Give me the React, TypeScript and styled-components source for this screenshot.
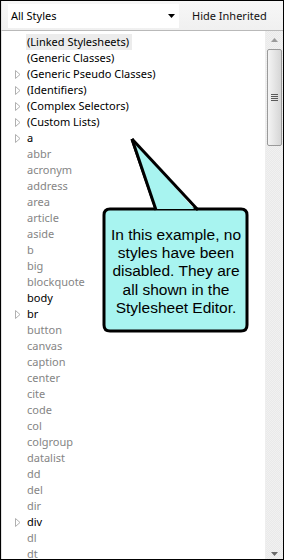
import React from 'react'
import styled, { createGlobalStyle } from 'styled-components'

const GlobalStyle = createGlobalStyle`
  html, body {
    margin: 0;
    padding: 0;
    background: #ffffff;
  }
`

type Item = { name: string; dark?: boolean; expand?: boolean; selected?: boolean }

const items: Item[] = [
  { name: '(Linked Stylesheets)', dark: true, selected: true },
  { name: '(Generic Classes)', dark: true },
  { name: '(Generic Pseudo Classes)', dark: true, expand: true },
  { name: '(Identifiers)', dark: true, expand: true },
  { name: '(Complex Selectors)', dark: true, expand: true },
  { name: '(Custom Lists)', dark: true, expand: true },
  { name: 'a', dark: true, expand: true },
  { name: 'abbr' },
  { name: 'acronym' },
  { name: 'address' },
  { name: 'area' },
  { name: 'article' },
  { name: 'aside' },
  { name: 'b' },
  { name: 'big' },
  { name: 'blockquote' },
  { name: 'body', dark: true },
  { name: 'br', dark: true, expand: true },
  { name: 'button' },
  { name: 'canvas' },
  { name: 'caption' },
  { name: 'center' },
  { name: 'cite' },
  { name: 'code' },
  { name: 'col' },
  { name: 'colgroup' },
  { name: 'datalist' },
  { name: 'dd' },
  { name: 'del' },
  { name: 'dir' },
  { name: 'div', dark: true, expand: true },
  { name: 'dl' },
  { name: 'dt' },
]

function StyleList() {
  return (
    <Frame>
      <GlobalStyle />
      <Toolbar>
        <Combo>
          <span>All Styles</span>
          <svg width="7" height="4" viewBox="0 0 7 4">
            <path d="M0 0 H7 L3.5 4 Z" fill="#000" />
          </svg>
        </Combo>
        <HideButton>Hide Inherited</HideButton>
      </Toolbar>
      <Body>
        <List>
          {items.map((item) => (
            <Row key={item.name}>
              <Expander>
                {item.expand && (
                  <svg width="6" height="9" viewBox="0 0 6 9">
                    <path d="M0.5 0.5 L5 4.5 L0.5 8.5 Z" fill="none" stroke="#b0b0b0" strokeWidth="1" />
                  </svg>
                )}
              </Expander>
              <Label $dark={item.dark} $selected={item.selected}>{item.name}</Label>
            </Row>
          ))}
        </List>
        <Scrollbar>
          <ArrowBtn>
            <svg width="7" height="4" viewBox="0 0 7 4">
              <path d="M0 4 L3.5 0 L7 4 Z" fill="#9a9a9a" />
            </svg>
          </ArrowBtn>
          <Thumb>
            <Grip />
          </Thumb>
          <Track />
          <ArrowBtn>
            <svg width="7" height="4" viewBox="0 0 7 4">
              <path d="M0 0 H7 L3.5 4 Z" fill="#6a6a6a" />
            </svg>
          </ArrowBtn>
        </Scrollbar>
        <Callout>
          <svg width="160" height="210" viewBox="0 0 160 210">
            <path
              d="M34 2 L58 72 L94 72 H143 Q149 72 149 78 V188 Q149 194 143 194 H12 Q6 194 6 188 V78 Q6 72 12 72 H57"
              fill="#a8f4f0"
              stroke="#000"
              strokeWidth="3"
            />
            <path d="M34 2 L58 72 L96 72 Z" fill="#a8f4f0" />
            <path d="M34 2 L58 73" stroke="#000" strokeWidth="3" />
            <path d="M34 2 L100 73" stroke="#000" strokeWidth="3" />
          </svg>
          <CalloutText>
            In this example, no styles have been disabled. They are all shown in the Stylesheet Editor.
          </CalloutText>
        </Callout>
      </Body>
    </Frame>
  )
}

const Frame = styled.div`
  width: 284px;
  height: 560px;
  box-sizing: border-box;
  border: 1px solid #000;
  background: #f4f4f4;
  display: flex;
  flex-direction: column;
  overflow: hidden;
  font-family: "Noto Sans", "Open Sans", sans-serif;
`

const Toolbar = styled.div`
  height: 29px;
  flex: none;
  display: flex;
  align-items: center;
  padding: 0 0 0 6px;
  border-bottom: 1px solid #b9b9b9;
  border-left: 1px solid #e2e2e2;
  background: linear-gradient(#f7f7f7, #f0f0f0);
`

const Combo = styled.div`
  width: 171px;
  height: 24px;
  box-sizing: border-box;
  background: #ffffff;
  display: flex;
  align-items: center;
  justify-content: space-between;
  padding: 0 4px 0 3px;
  font-size: 11px;
  color: #000;
`

const HideButton = styled.div`
  margin-left: 13px;
  font-size: 11px;
  color: #111;
`

const Body = styled.div`
  flex: 1;
  display: flex;
  position: relative;
  background: #ffffff;
  border-left: 1px solid #e2e2e2;
`

const List = styled.div`
  flex: 1;
  padding-top: 3px;
  overflow: hidden;
`

const Row = styled.div`
  height: 16px;
  display: flex;
  align-items: center;
`

const Expander = styled.div`
  width: 24px;
  height: 16px;
  display: flex;
  align-items: center;
  justify-content: flex-start;
  padding-left: 13px;
  box-sizing: border-box;
`

const Label = styled.span<{ $dark?: boolean; $selected?: boolean }>`
  font-size: 11px;
  line-height: 16px;
  padding: 0 3px 0 1px;
  white-space: nowrap;
  color: ${(p) => (p.$dark ? '#000000' : '#858585')};
  background: ${(p) => (p.$selected ? '#ececec' : 'transparent')};
`

const Scrollbar = styled.div`
  width: 17px;
  flex: none;
  display: flex;
  flex-direction: column;
  background: repeating-conic-gradient(#f1f1f1 0 25%, #e9e9e9 0 50%) 0 0 / 2px 2px;
  border-left: 1px solid #eeeeee;
`

const ArrowBtn = styled.div`
  height: 17px;
  display: flex;
  align-items: center;
  justify-content: center;
`

const Thumb = styled.div`
  height: 97px;
  margin: 1px 1px 0 1px;
  box-sizing: border-box;
  border: 1px solid #9a9a9a;
  border-radius: 2px;
  background: linear-gradient(90deg, #f4f4f4, #e2e2e2 60%, #d6d6d6);
  display: flex;
  align-items: center;
  justify-content: center;
`

const Grip = styled.div`
  width: 7px;
  height: 7px;
  background: repeating-linear-gradient(#5a5a5a 0 1px, transparent 1px 2px);
`

const Track = styled.div`
  flex: 1;
`

const Callout = styled.div`
  position: absolute;
  left: 96px;
  top: 106px;
  width: 160px;
  height: 210px;

  svg {
    position: absolute;
    left: 0;
    top: 0;
  }
`

const CalloutText = styled.div`
  position: absolute;
  left: 8px;
  top: 89px;
  width: 140px;
  text-align: center;
  font-family: "Liberation Sans", Arial, sans-serif;
  font-size: 15.5px;
  line-height: 18.2px;
  color: #000;
`

export default function App() {
  return <StyleList />
}
